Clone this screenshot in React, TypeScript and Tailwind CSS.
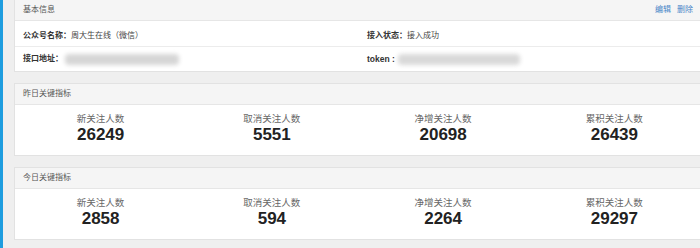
import "react";

const FONT = { fontFamily: '"Liberation Sans", "Noto Sans CJK SC", sans-serif' };

interface Stat {
  label: string;
  value: string;
}

const yesterday: Stat[] = [
  { label: "新关注人数", value: "26249" },
  { label: "取消关注人数", value: "5551" },
  { label: "净增关注人数", value: "20698" },
  { label: "累积关注人数", value: "26439" },
];

const today: Stat[] = [
  { label: "新关注人数", value: "2858" },
  { label: "取消关注人数", value: "594" },
  { label: "净增关注人数", value: "2264" },
  { label: "累积关注人数", value: "29297" },
];

function StatPanel({ title, stats }: { title: string; stats: Stat[] }) {
  return (
    <div className="border border-r-0 border-[#e2e2e2] bg-white">
      <div className="flex h-[21px] items-center bg-[#f5f5f5] px-[8px] text-[8px] text-[#555] border-b border-[#e6e6e6]">
        {title}
      </div>
      <div className="grid h-[50px] grid-cols-4">
        {stats.map((s) => (
          <div key={s.label} className="flex flex-col items-center pt-[8px]">
            <span className="text-[9.5px] leading-[11px] text-[#666]">{s.label}</span>
            <span className="mt-[2px] text-[17px] font-bold leading-[18px] text-[#222]">{s.value}</span>
          </div>
        ))}
      </div>
    </div>
  );
}

export default function App() {
  return (
    <div className="flex h-[248px] w-[700px] overflow-hidden bg-[#efefef]" style={FONT}>
      <div className="w-[3px] shrink-0 bg-[#1e9ddf]" />
      <div className="flex flex-1 flex-col gap-[11px] pl-[11px]">
        {/* 基本信息 */}
        <div className="border border-t-0 border-r-0 border-[#e2e2e2] bg-white">
          <div className="flex h-[21px] items-center justify-between bg-[#f5f5f5] pl-[8px] pr-[7px] text-[8px] text-[#555] border-b border-[#e6e6e6]">
            <span>基本信息</span>
            <div className="flex gap-[6px] text-[#4a86c8]">
              <span>编辑</span>
              <span>删除</span>
            </div>
          </div>
          <div className="grid h-[26px] grid-cols-[344px_1fr] items-center border-b border-[#ececec] px-[8px] pt-[4px] text-[8px] text-[#444]">
            <div>
              <span className="font-bold text-[#333]">公众号名称：</span>周大生在线（微信）
            </div>
            <div>
              <span className="font-bold text-[#333]">接入状态：</span>接入成功
            </div>
          </div>
          <div className="grid h-[24px] grid-cols-[344px_1fr] items-center px-[8px] text-[8px] text-[#444]">
            <div className="flex items-center">
              <span className="font-bold text-[#333]">接口地址：</span>
              <span className="ml-[2px] h-[11px] w-[114px] rounded-sm bg-[#d6d6d6] blur-[2px]" />
            </div>
            <div className="flex items-center">
              <span className="text-[8.5px] font-bold text-[#333]">token :</span>
              <span className="ml-[3px] h-[11px] w-[122px] rounded-sm bg-[#d9d9d9] blur-[2px]" />
            </div>
          </div>
        </div>

        <StatPanel title="昨日关键指标" stats={yesterday} />
        <StatPanel title="今日关键指标" stats={today} />
      </div>
    </div>
  );
}
